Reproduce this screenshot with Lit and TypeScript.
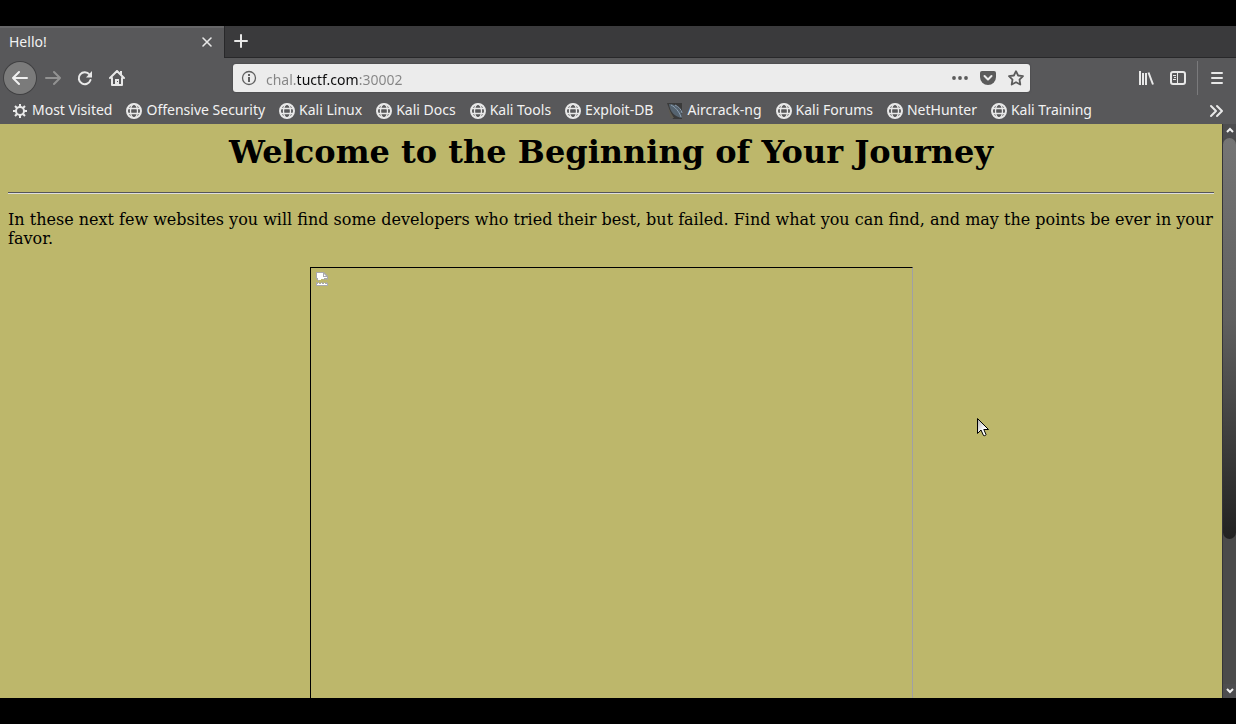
import { LitElement, html, css, svg } from "lit";
import { customElement, property } from "lit/decorators.js";

const globe = svg`<g fill="none" stroke="#e8e8e8"><circle cx="8" cy="8" r="7" stroke-width="2"/><ellipse cx="8" cy="8" rx="3.5" ry="7" stroke-width="1.3"/><path d="M2 5.5h12M2 10.5h12" stroke-width="1.3"/></g>`;

const icons: Record<string, unknown> = {
  globe,
  gear: svg`<g fill="none" stroke="#e8e8e8"><circle cx="8" cy="8" r="4" stroke-width="2"/><path stroke-width="2" d="M8 1v3M8 12v3M1 8h3M12 8h3M3 3l2 2M11 11l2 2M3 13l2-2M11 5l2-2"/></g>`,
  aircrack: svg`<path fill="#3a3a3a" d="M0 0h15v16H6z"/><path fill="#55636f" d="M2 1c8 0 13 5 13 14C8 14 3 9 2 1z"/><path fill="none" stroke="#8da0b4" d="M4 2c4 2 8 6 10 12M8 2c4 2 6 4 7 8"/><path fill="#5d5a50" d="M1 5l6 10H4z"/>`,
  back: svg`<path fill="none" stroke="#f0f0f0" stroke-width="2" stroke-linecap="round" stroke-linejoin="round" d="M7 2L1 8l6 6M1 8h14"/>`,
  forward: svg`<path fill="none" stroke="#929292" stroke-width="2" stroke-linecap="round" stroke-linejoin="round" d="M9 2l6 6-6 6M15 8H1"/>`,
  reload: svg`<path fill="none" stroke="#e8e8e8" stroke-width="2" stroke-linecap="round" d="M12.500 4.500A6 6 0 1 0 13.500 10"/><path fill="#e8e8e8" d="M15 1v6.500H9z"/>`,
  home: svg`<path fill="none" stroke="#e8e8e8" stroke-width="2" stroke-linecap="round" stroke-linejoin="round" d="M1 8l7-7 7 7M3 8v7h10V8"/><path fill="#e8e8e8" d="M6 9h4v6H6zM11 1h2v4h-2z"/><path fill="#58585a" d="M8 11h1v1H8z"/>`,
  close: svg`<path fill="none" stroke="#e8e8e8" stroke-width="1.600" stroke-linecap="round" d="M4 4l8 8M12 4l-8 8"/>`,
  plus: svg`<path fill="none" stroke="#e8e8e8" stroke-width="2" stroke-linecap="round" d="M8 2v12M2 8h12"/>`,
  info: svg`<circle cx="8" cy="8" r="6.500" fill="none" stroke="#606060" stroke-width="1.300"/><path fill="#606060" d="M7 7h2v5H7zM7 4h2v2H7z"/>`,
  dots: svg`<g fill="#5b5b5b"><circle cx="2" cy="8" r="1.900"/><circle cx="8" cy="8" r="1.900"/><circle cx="14" cy="8" r="1.900"/></g>`,
  pocket: svg`<path fill="#5b5b5b" d="M2 1h12a2 2 0 0 1 2 2v4A8 8 0 0 1 0 7V3a2 2 0 0 1 2-2z"/><path fill="none" stroke="#ececec" stroke-width="2" stroke-linecap="round" stroke-linejoin="round" d="M4.500 6L8 9.500l3.500-3.500"/>`,
  star: svg`<path fill="none" stroke="#5b5b5b" stroke-width="1.800" stroke-linejoin="round" d="M8 1.200l2.100 4.300 4.900.7-3.500 3.400.8 4.900L8 12.200l-4.300 2.300.8-4.900L1 6.200l4.900-.7z"/>`,
  library: svg`<path fill="none" stroke="#e8e8e8" stroke-width="2" d="M2 1v14M5 3v12M8 3v12M10.500 2.500L15 14.500"/>`,
  sidebar: svg`<rect x="1" y="2" width="14" height="12" rx="2" fill="none" stroke="#e8e8e8" stroke-width="2"/><path stroke="#e8e8e8" d="M7.500 3v10M3 5.500h3M4 7.500h2M3 9.500h3"/>`,
  menu: svg`<path stroke="#e8e8e8" stroke-width="2" stroke-linecap="round" d="M3 3h10M3 8h10M3 13h10"/>`,
  more: svg`<path fill="none" stroke="#e8e8e8" stroke-width="2" stroke-linecap="round" stroke-linejoin="round" d="M3 3l5 5-5 5M9 3l5 5-5 5"/>`,
  up: svg`<path fill="none" stroke="#f0f0f0" stroke-width="2" d="M5 9l3-3 3 3"/>`,
  down: svg`<path fill="none" stroke="#f0f0f0" stroke-width="2" d="M5 6l3 3 3-3"/>`,
};

@customElement("ui-icon")
export class UiIcon extends LitElement {
  @property() name = "globe";
  static styles = css`
    :host { display: block; flex: none; width: 16px; height: 16px; }
    svg { display: block; }
  `;
  render() {
    return html`<svg width="16" height="16" viewBox="0 0 16 16" aria-hidden="true">${icons[this.name]}</svg>`;
  }
}

@customElement("page-scrollbar")
export class PageScrollbar extends LitElement {
  @property({ type: Number }) visible = 73;
  static styles = css`
    :host { display: flex; flex-direction: column; flex: none; width: 14px; box-sizing: border-box; background: #4d4d4f; border-left: 1px solid #353536; }
    .step { display: grid; place-content: center; height: 14px; padding: 0; border: 0; background: #4d4d4f; overflow: hidden; }
    .track { flex: 1; background: #4b4b4b; }
    .thumb { border-radius: 7px; background: linear-gradient(#757575, #606060 45%, #222); }
  `;
  render() {
    return html`
      <button class="step" aria-label="Scroll up"><ui-icon name="up"></ui-icon></button>
      <div class="track"><div class="thumb" style="height:${this.visible}%"></div></div>
      <button class="step" aria-label="Scroll down"><ui-icon name="down"></ui-icon></button>
    `;
  }
}

const bookmarks = [
  ["gear", "Most Visited"], ["globe", "Offensive Security"], ["globe", "Kali Linux"],
  ["globe", "Kali Docs"], ["globe", "Kali Tools"], ["globe", "Exploit-DB"],
  ["aircrack", "Aircrack-ng"], ["globe", "Kali Forums"], ["globe", "NetHunter"],
  ["globe", "Kali Training"],
];

@customElement("app-root")
export class AppRoot extends LitElement {
  static styles = css`
    :host { display: flex; flex-direction: column; height: 100vh; box-sizing: border-box; padding: 26px 0; background: #000; overflow: hidden; position: relative; font: 14px/20px "Noto Sans", sans-serif; color: #f2f2f2; }
    button { display: grid; place-items: center; padding: 0; border: 0; background: none; }
    .tabs { display: flex; flex: none; height: 32px; background: #3a3a3c; }
    .tab { display: flex; align-items: center; justify-content: space-between; width: 224px; box-sizing: border-box; padding: 0 9px 2px; background: #58585a; border-top: 2px solid #666668; }
    .strip { flex: 1; display: flex; align-items: center; padding: 0 8px 1px; border-left: 1px solid #28282a; border-bottom: 1px solid #28282a; }
    .nav { display: flex; flex: none; align-items: center; height: 40px; padding: 0 3px 0 4px; background: #58585a; }
    .tools { display: flex; align-items: center; width: 229px; }
    .tool { width: 32px; height: 32px; }
    .back { margin-right: 1px; background: #7b7b7b; border-radius: 50%; box-shadow: 0 0 0 1px #404042; }
    .url { display: flex; align-items: center; gap: 9px; flex: 1; height: 28px; box-sizing: border-box; padding: 0 6px 0 8px; border-radius: 3px; background: #ececec; box-shadow: 0 0 1px 1px #505052; }
    .address { flex: 1; min-width: 0; height: 26px; box-sizing: border-box; padding: 2px 0 0; border: 0; outline: 0; font: 14px/24px "Noto Sans", sans-serif; color: transparent; background: linear-gradient(90deg, #858585 31px, #0c0c0d 31px 93px, #858585 93px); -webkit-background-clip: text; background-clip: text; }
    .actions { display: flex; gap: 12px; }
    .right { display: flex; align-items: center; justify-content: flex-end; width: 203px; }
    .divider { width: 1px; height: 34px; margin: 0 3px; background: #7a7a7c; }
    .bookmarks { display: flex; flex: none; align-items: center; gap: 14px; height: 26px; box-sizing: border-box; padding: 0 12px; background: #58585a; }
    .bookmark { display: flex; align-items: center; gap: 4px; color: inherit; text-decoration: none; white-space: nowrap; }
    .bookmark span { padding-bottom: 2px; }
    .overflow { margin-left: auto; }
    .view { display: flex; flex: 1; min-height: 0; }
    .page { flex: 1; min-width: 0; overflow: hidden; box-sizing: border-box; padding: 9px 8px 8px; background: #bdb76b; color: #000; font: 16px/19px "DejaVu Serif", serif; }
    h1 { margin: 0 0 21px; font-size: 32px; line-height: 38px; text-align: center; }
    hr { height: 2px; margin: 0 0 16px; border: 0; box-sizing: border-box; border-top: 1px solid #55555a; border-bottom: 1px solid #dedede; }
    p { margin: 0 0 19px; }
    .picture { width: 603px; max-width: 100%; height: 603px; margin: 0 auto; box-sizing: border-box; padding: 3px 4px; border: 1px solid; border-color: #000 #a0a0a4 #a0a0a4 #000; }
    .broken, .cursor { display: block; }
    .cursor { position: absolute; left: 976px; top: 417px; }
  `;

  render() {
    return html`
      <div class="tabs">
        <div class="tab"><span>Hello!</span><button aria-label="Close tab"><ui-icon name="close"></ui-icon></button></div>
        <div class="strip"><button aria-label="New tab"><ui-icon name="plus"></ui-icon></button></div>
      </div>
      <nav class="nav">
        <div class="tools">
          <button class="tool back" aria-label="Back"><ui-icon name="back"></ui-icon></button>
          <button class="tool" aria-label="Forward"><ui-icon name="forward"></ui-icon></button>
          <button class="tool" aria-label="Reload"><ui-icon name="reload"></ui-icon></button>
          <button class="tool" aria-label="Home"><ui-icon name="home"></ui-icon></button>
        </div>
        <div class="url">
          <button aria-label="Site information"><ui-icon name="info"></ui-icon></button>
          <input class="address" type="text" aria-label="Address" spellcheck="false" value="chal.tuctf.com:30002">
          <div class="actions">
            <button aria-label="Page actions"><ui-icon name="dots"></ui-icon></button>
            <button aria-label="Save to Pocket"><ui-icon name="pocket"></ui-icon></button>
            <button aria-label="Bookmark this page"><ui-icon name="star"></ui-icon></button>
          </div>
        </div>
        <div class="right">
          <button class="tool" aria-label="Library"><ui-icon name="library"></ui-icon></button>
          <button class="tool" aria-label="Sidebars"><ui-icon name="sidebar"></ui-icon></button>
          <span class="divider"></span>
          <button class="tool" aria-label="Menu"><ui-icon name="menu"></ui-icon></button>
        </div>
      </nav>
      <div class="bookmarks">
        ${bookmarks.map(([icon, label]) => html`<a class="bookmark" href="#"><ui-icon name=${icon}></ui-icon><span>${label}</span></a>`)}
        <button class="overflow" aria-label="More bookmarks"><ui-icon name="more"></ui-icon></button>
      </div>
      <div class="view">
        <main class="page">
          <h1>Welcome to the Beginning of Your Journey</h1>
          <hr>
          <p>In these next few websites you will find some developers who tried their best, but failed. Find what you can find, and may the points be ever in your favor.</p>
          <div class="picture" role="img" aria-label="Missing picture">
            <svg class="broken" width="14" height="16" viewBox="0 0 14 16">
              <path fill="#a9a9ad" d="M1 1h8l4 4v4h-1v-1h-1v1h-1v-1H9v1H8v-1H6v1H4v1H3V9H2V8H1zM1 11h1v1h1v-1h1v1h2v-1h1v1h1v-1h1v1h2v-1h1v1h1v3H1z"/>
              <path fill="#fff" d="M2 2h6v4h4v1H9v1H6v1H3V7H2zM2 13h10v1H2z"/>
              <path fill="#fff" d="M9 3l2 2H9zM3 12h1v1H3zM6 12h1v1H6zM9 12h1v1H9z"/>
            </svg>
          </div>
        </main>
        <page-scrollbar .visible=${73.4}></page-scrollbar>
      </div>
      <svg class="cursor" width="14" height="21" viewBox="0 0 14 21" aria-hidden="true">
        <defs><linearGradient id="shade" x2="1" y2="1"><stop stop-color="#aaa"/><stop offset=".6" stop-color="#fff"/></linearGradient></defs>
        <path fill="url(#shade)" stroke="#000" d="M1.500 1.500v15l3.500-3.500 2.500 5.500c1 .5 2.500 0 2.500-1L7.800 12.500h4.700z"/>
      </svg>
    `;
  }
}
